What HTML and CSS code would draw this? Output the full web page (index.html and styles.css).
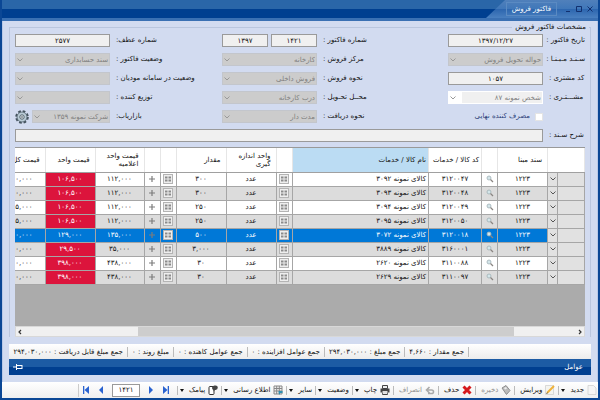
FILE: index.html
```html
<!DOCTYPE html>
<html lang="fa" dir="rtl">
<head>
<meta charset="utf-8">
<title>فاکتور فروش</title>
<link rel="stylesheet" href="styles.css">
</head>
<body>
<svg class="defs" aria-hidden="true">
  <symbol id="chev" viewBox="0 0 8 6"><path d="M1.5 1.5 4 4l2.500-2.500" fill="none" stroke="currentColor"/></symbol>
  <symbol id="card" viewBox="0 0 10 10"><rect x=".5" y=".5" width="9" height="9" fill="#eee" stroke="#b4b4b4"/><path d="M2 2.500h2.500v2H2zM5.500 2.500H8v2H5.500zM2 5.500h2.500v2H2zM5.500 5.500H8v2H5.500z" fill="#8b8b8b"/></symbol>
  <symbol id="plus" viewBox="0 0 8 8"><path d="M4 1v6M1 4h6" stroke="#7c7c7c" stroke-width="1.200"/></symbol>
  <symbol id="mag" viewBox="0 0 8 8"><circle cx="3" cy="3" r="2" fill="#d4e6ea" stroke="#9fb0b5" stroke-width=".8"/><path d="m4.500 4.500 2.500 2.500" stroke="#8a8582" stroke-width="1.200"/></symbol>
</svg>
<div class="window">
  <header class="titlebar">
    <div class="tab">
      <button aria-label="بستن"><svg viewBox="0 0 8 8"><path d="m1.500 1.500 5 5m0-5-5 5"/></svg></button>
      <button aria-label="بزرگ"><svg viewBox="0 0 8 8"><path d="M1.500 1.500h5v5h-5z"/></svg></button>
      <button aria-label="کوچک"><svg viewBox="0 0 8 8"><path d="M2 6.500h4"/></svg></button>
      <h1>فاکتور فروش</h1>
    </div>
  </header>

  <main class="content">
    <fieldset class="panel">
      <legend>مشخصات فاکتور فروش</legend>
      <div class="form">
        <label for="date">تاریخ فاکتور :</label><input id="date" value="۱۳۹۷/۱۲/۲۷">
        <label for="num">شماره فاکتور :</label><div class="pair"><input id="num" value="۱۴۲۱"><input aria-label="سال" value="۱۳۹۷"></div>
        <label for="ref">شماره عطف:</label><input id="ref" value="۲۵۷۷">

        <label for="base">سـنـد مـبـنـا :</label><div class="combo"><select id="base" disabled><option>حواله تحویل فروش</option></select><svg><use href="#chev"/></svg></div>
        <label for="center">مرکز فروش :</label><div class="combo"><select id="center" disabled><option>کارخانه</option></select><svg><use href="#chev"/></svg></div>
        <label for="state">وضعیت فاکتور :</label><div class="combo"><select id="state" disabled><option>سند حسابداری</option></select><svg><use href="#chev"/></svg></div>

        <label for="code">کد مشتری :</label><input id="code" value="۱۰۵۷">
        <label for="kind">نحوه فروش :</label><div class="combo"><select id="kind" disabled><option>فروش داخلی</option></select><svg><use href="#chev"/></svg></div>
        <label for="tax">وضعیت در سامانه مودیان :</label><div class="combo"><select id="tax" disabled><option></option></select><svg><use href="#chev"/></svg></div>

        <label for="cust">مشـــتـری :</label><div class="combo customer"><select id="cust" disabled><option>شخص نمونه ۸۷</option></select><svg><use href="#chev"/></svg></div>
        <label for="place">محــل تحـویل :</label><div class="combo"><select id="place" disabled><option>درب کارخانه</option></select><svg><use href="#chev"/></svg></div>
        <label for="dist">توزیع کننده :</label><div class="combo"><select id="dist" disabled><option></option></select><svg><use href="#chev"/></svg></div>

        <div class="check"><input type="checkbox" id="final"><label for="final">مصرف کننده نهایی</label></div>
        <label for="pay">نحوه دریافت :</label><div class="combo"><select id="pay" disabled><option>مدت دار</option></select><svg><use href="#chev"/></svg></div>
        <label for="agent">بازاریاب:</label>
        <div class="agent"><div class="combo"><select id="agent" disabled><option>شرکت نمونه ۱۳۵۹</option></select><svg><use href="#chev"/></svg></div>
          <button class="gear" aria-label="تنظیمات"><svg viewBox="0 0 14 14"><circle cx="7" cy="7" r="5.600" fill="none" stroke="#44535e" stroke-width="2.400" stroke-dasharray="2.600 1.798"/><circle cx="7" cy="7" r="5" fill="#b9cbd6" stroke="#51616d" stroke-width=".8"/><circle cx="7" cy="7" r="2.200" fill="#eef3f6" stroke="#51616d"/><circle cx="7" cy="7" r=".8" fill="#33424d"/></svg></button></div>

        <label for="desc">شرح سـند :</label><input id="desc" class="wide">
      </div>

      <div class="grid">
        <table>
          <colgroup><col class="c27"><col class="c10"><col class="c50"><col class="c16"><col class="c53"><col><col class="c16"><col class="c50"><col class="c50"><col class="c16"><col class="c16"><col class="c49"><col class="c50"><col class="c30"></colgroup>
          <thead><tr><th colspan="2"></th><th>سند مبنا</th><th></th><th class="tight">کد کالا / خدمات</th><th class="tight sorted">نام کالا / خدمات</th><th></th><th>واحد اندازه گیری</th><th>مقدار</th><th></th><th></th><th>قیمت واحد اعلامیه</th><th>قیمت واحد</th><th class="cut">قیمت کل</th></tr></thead>
          <tbody>
            <tr><td class="rh"></td><td class="rh"><svg class="dd"><use href="#chev"/></svg></td><td>۱۲۲۳</td><td><svg><use href="#mag"/></svg></td><td>۳۱۲۰۰۴۷</td><td class="name">کالای نمونه ۳۰۹۲</td><td><svg class="cd"><use href="#card"/></svg></td><td>عدد</td><td>۳۰۰</td><td><svg class="cd"><use href="#card"/></svg></td><td><svg><use href="#plus"/></svg></td><td>۱۱۲,۰۰۰</td><td class="red">۱۰۶,۵۰۰</td><td class="cut">۰,۰۰۰</td></tr>
            <tr><td class="rh"></td><td class="rh"><svg class="dd"><use href="#chev"/></svg></td><td>۱۲۲۳</td><td><svg><use href="#mag"/></svg></td><td>۳۱۲۰۰۴۸</td><td class="name">کالای نمونه ۳۰۹۳</td><td><svg class="cd"><use href="#card"/></svg></td><td>عدد</td><td>۳۰۰</td><td><svg class="cd"><use href="#card"/></svg></td><td><svg><use href="#plus"/></svg></td><td>۱۱۲,۰۰۰</td><td class="red">۱۰۶,۵۰۰</td><td class="cut">۰,۰۰۰</td></tr>
            <tr><td class="rh"></td><td class="rh"><svg class="dd"><use href="#chev"/></svg></td><td>۱۲۲۳</td><td><svg><use href="#mag"/></svg></td><td>۳۱۲۰۰۴۹</td><td class="name">کالای نمونه ۳۰۹۴</td><td><svg class="cd"><use href="#card"/></svg></td><td>عدد</td><td>۲۵۰</td><td><svg class="cd"><use href="#card"/></svg></td><td><svg><use href="#plus"/></svg></td><td>۱۱۲,۰۰۰</td><td class="red">۱۰۶,۵۰۰</td><td class="cut">۵,۰۰۰</td></tr>
            <tr><td class="rh"></td><td class="rh"><svg class="dd"><use href="#chev"/></svg></td><td>۱۲۲۳</td><td><svg><use href="#mag"/></svg></td><td>۳۱۲۰۰۵۰</td><td class="name">کالای نمونه ۳۰۹۵</td><td><svg class="cd"><use href="#card"/></svg></td><td>عدد</td><td>۲۵۰</td><td><svg class="cd"><use href="#card"/></svg></td><td><svg><use href="#plus"/></svg></td><td>۱۱۲,۰۰۰</td><td class="red">۱۰۶,۵۰۰</td><td class="cut">۵,۰۰۰</td></tr>
            <tr class="sel"><td class="rh"></td><td class="rh"><svg class="dd"><use href="#chev"/></svg></td><td>۱۲۲۳</td><td><svg><use href="#mag"/></svg></td><td>۳۱۲۰۰۱۸</td><td class="name">کالای نمونه ۳۰۷۲</td><td><svg class="cd"><use href="#card"/></svg></td><td>عدد</td><td>۵۰۰</td><td><svg class="cd"><use href="#card"/></svg></td><td><svg><use href="#plus"/></svg></td><td>۱۳۵,۰۰۰</td><td>۱۲۹,۰۰۰</td><td class="cut">۰,۰۰۰</td></tr>
            <tr><td class="rh"></td><td class="rh"><svg class="dd"><use href="#chev"/></svg></td><td>۱۲۲۳</td><td><svg><use href="#mag"/></svg></td><td>۳۱۶۰۰۰۱</td><td class="name">کالای نمونه ۳۸۸۹</td><td><svg class="cd"><use href="#card"/></svg></td><td>عدد</td><td>۳,۰۰۰</td><td><svg class="cd"><use href="#card"/></svg></td><td><svg><use href="#plus"/></svg></td><td>۳۵,۰۰۰</td><td class="red">۲۹,۵۰۰</td><td class="cut">۰,۰۰۰</td></tr>
            <tr><td class="rh"></td><td class="rh"><svg class="dd"><use href="#chev"/></svg></td><td>۱۲۲۳</td><td><svg><use href="#mag"/></svg></td><td>۳۱۱۰۰۸۸</td><td class="name">کالای نمونه ۲۶۲۰</td><td><svg class="cd"><use href="#card"/></svg></td><td>عدد</td><td>۳۰</td><td><svg class="cd"><use href="#card"/></svg></td><td><svg><use href="#plus"/></svg></td><td>۴۳۸,۰۰۰</td><td class="red">۳۹۸,۰۰۰</td><td class="cut">۰,۰۰۰</td></tr>
            <tr><td class="rh"></td><td class="rh"><svg class="dd"><use href="#chev"/></svg></td><td>۱۲۲۳</td><td><svg><use href="#mag"/></svg></td><td>۳۱۱۰۰۹۷</td><td class="name">کالای نمونه ۲۶۲۹</td><td><svg class="cd"><use href="#card"/></svg></td><td>عدد</td><td>۳۰</td><td><svg class="cd"><use href="#card"/></svg></td><td><svg><use href="#plus"/></svg></td><td>۴۳۸,۰۰۰</td><td class="red">۳۹۸,۰۰۰</td><td class="cut">۰,۰۰۰</td></tr>
          </tbody>
        </table>
        <div class="scroll"><svg viewBox="0 0 8 8"><path d="m3 2 2 2-2 2"/></svg><div class="track"><div class="thumb"></div></div><svg viewBox="0 0 8 8"><path d="M5 2 3 4l2 2"/></svg></div>
      </div>
    </fieldset>

    <div class="sums">
      <span>جمع مقدار : <b>۴,۶۶۰</b></span><span>جمع مبلغ : <b>۲۹۴,۰۳۰,۰۰۰</b></span><span>جمع عوامل افزاینده : <b>۰</b></span><span>جمع عوامل کاهنده : <b>۰</b></span><span>مبلغ روند : <b>۰</b></span><span>جمع مبلغ قابل دریافت : <b>۲۹۴,۰۳۰,۰۰۰</b></span>
    </div>
    <div class="factors"><span>عوامل</span><svg viewBox="0 0 10 8"><path d="M0 4h3M3.500 1v6M4 2.500h5M4 5.500h5M9 2v4" fill="none" stroke="#fff"/></svg></div>
  </main>

  <footer class="toolbar">
    <button class="menu"><svg viewBox="0 0 10 10"><path d="M1 .5h5.500L9 3v6.500H1z" fill="#f5f5f5" stroke="#ccc" stroke-width=".7"/></svg>جدید<i class="caret"></i></button>
    <button><svg viewBox="0 0 10 10"><path d="M.5.500h8v9h-8z" fill="#f4f4ef" stroke="#ccc" stroke-width=".7"/><path d="m2 8 7-7" stroke="#efb23a" stroke-width="2"/><path d="m1.500 9 1-1.500" stroke="#666"/></svg>ویرایش</button>
    <button class="off"><svg viewBox="0 0 10 10"><path d="m1 3 4-2.500 4 5-3.500 4z" fill="#bbb" stroke="#8e8e8e"/><path d="m3 3 2-1 1 1.500-2 1z" fill="#eee"/></svg>ذخیره</button>
    <button><svg viewBox="0 0 10 10"><path d="m1.500 1.500 7 7m0-7-7 7" stroke="#d6191c" stroke-width="3"/></svg>حذف</button>
    <button class="off"><svg viewBox="0 0 10 10"><path d="M2 5h4.500q2 0 2 1.800T6.500 8.500H3M4.500 2 1.500 5l3 3" fill="none" stroke="#aaa" stroke-width="1.600"/></svg>انصراف</button>
    <button class="menu"><svg viewBox="0 0 10 10"><path d="M2.500.500h5v3h-5zM2.500 6.500h5v3h-5z" fill="#eee" stroke="#444"/><path d="M.5 3.500h9v4h-9z" fill="#444"/><path d="M2.500 6h5v2.500h-5z" fill="#ddd"/></svg>چاپ<i class="caret"></i></button>
    <button class="menu">وضعیت<i class="caret"></i></button>
    <button class="menu">سایر<i class="caret"></i></button>
    <button class="menu"><svg viewBox="0 0 10 10"><path d="M1 1h8v8H1z" fill="#eee" stroke="#888"/><path d="M1 3.500h8M1 6h8M3.700 1v8M6.300 1v8" stroke="#888"/><path d="M5.500 6h4v2h-2l-1.500 2z" fill="#2f8fb0"/></svg>اطلاع رسانی<i class="caret"></i></button>
    <button class="menu"><svg viewBox="0 0 10 10"><rect x="1" y="1.500" width="5" height="8" rx="1" fill="#fff" stroke="#333"/><path d="M6.500.500h1q2.300 0 2.300 2T7.500 5H7L5.500 6.500V5Q4 4.500 4 2.700T6.500.500z" fill="#444"/></svg>پیامک<i class="caret"></i></button>
    <div class="pager">
      <button aria-label="آخر"><svg viewBox="0 0 8 8"><path d="M1 0l4.500 4L1 8zM5.700 0H7v8H5.700z"/></svg></button>
      <button aria-label="بعدی"><svg viewBox="0 0 8 8"><path d="M2 0l4 4-4 4z"/></svg></button>
      <input aria-label="شماره" value="۱۴۲۱">
      <button aria-label="قبلی"><svg viewBox="0 0 8 8"><path d="M6 0 2 4l4 4z"/></svg></button>
      <button aria-label="اول"><svg viewBox="0 0 8 8"><path d="M7 0 2.500 4 7 8zM1 0h1.300v8H1z"/></svg></button>
    </div>
  </footer>
</div>
</body>
</html>
```

FILE: styles.css
```css
* { box-sizing: border-box; }
body { margin: 0; font: 7px/10px "DejaVu Sans", sans-serif; color: #111; }
button, input, select { font: inherit; color: inherit; margin: 0; padding: 0; border: 0; background: none; border-radius: 0; }
.defs { display: none; }
svg { display: block; width: 8px; height: 8px; }
.window { min-height: 100vh; display: flex; flex-direction: column; background: #d2dbf0; border: 2px solid #0b4795; border-top: 0; }

.titlebar { height: 21px; background: linear-gradient(#2a66a8 0 9px, #003f90 9px 18px, #3a70b3 18px); }
.tab { width: 112px; height: 18px; padding-right: 4px; display: flex; align-items: center; gap: 3px; background: linear-gradient(#5080bb, #3f77b9 50%, #2c65ae 50%, #4a80c0); clip-path: polygon(17% 0, 100% 0, 100% 100%, 0 100%); }
.tab svg { fill: none; stroke: #12306f; }
.tab h1 { margin: 0 4px 0 0; padding: 0 5px; font-size: 7px; font-weight: 400; line-height: 12px; color: #fff; border: 1px solid #5a8ac2; white-space: nowrap; }

.content { flex: 1; padding: 1px 6px 7px; border: solid #b9c9e8; border-width: 0 1px; }
.panel { margin: 0; padding: 2px 5px 0; border: 1px solid #bac6de; border-bottom: 0; min-width: 0; }
.panel legend { padding: 0 3px; margin-right: -4px; line-height: 10px; }
.form { display: grid; grid-template-columns: 36px 1fr 119px 1fr 100px 1fr; grid-auto-rows: 13px; gap: 6px; align-items: stretch; }
.form label { text-align: left; line-height: 13px; white-space: nowrap; }
.form input:not([type]), .pager input { width: 100%; min-width: 0; text-align: center; background: #f0f0f0; border: 1px solid #9a9a9a; }
.pair, .agent { display: flex; gap: 3px; min-width: 0; }
.agent { align-items: center; }
.agent .combo { flex: 1; }
.combo { position: relative; min-width: 0; height: 13px; color: #999; }
.combo select { appearance: none; width: 100%; height: 13px; padding: 0 1px; background: #ccc; border: 1px solid #c3c6cc; opacity: 1; color: #808080; }
.combo svg { position: absolute; left: 1px; top: 4px; height: 6px; }
.customer select { background: linear-gradient(90deg, #fff 13px, #f0f0f0 13px); border-color: #fff; }
.gear svg { width: 14px; height: 14px; }
.check { grid-column: 2; display: flex; align-items: center; gap: 5px; color: #2c3f78; }
.check input { appearance: none; width: 8px; height: 8px; background: #fff; border: 1px solid #e4e4e4; }
.form .wide { grid-column: 2 / -1; }

.grid { margin-top: 5px; height: 190px; display: flex; flex-direction: column; background: #ababab; border-top: 1px solid #999; }
table { width: 100%; table-layout: fixed; border-collapse: collapse; }
.c10 { width: 10px; } .c16 { width: 16px; } .c27 { width: 27px; } .c30 { width: 30px; } .c49 { width: 49px; } .c50 { width: 50px; } .c53 { width: 53px; }
th { height: 24px; padding: 0 5px; font-weight: 400; line-height: 8px; text-align: right; background: #fff; border: solid #e6e6e6; border-width: 0 1px; border-bottom: 1px solid #a0a0a0; }
th.tight { padding: 0 2px; white-space: nowrap; }
th.sorted { background: #bbdcf3; }
td { height: 14px; padding: 0; text-align: center; line-height: 12px; background: #fff; border: 1px solid #a6a6a6; overflow: hidden; white-space: nowrap; }
tr:nth-child(even) td { background: #dcdcdc; }
td svg { margin: 0 auto; }
td .dd { height: 6px; color: #555; }
td .cd { width: 10px; height: 10px; }
td.name { text-align: right; padding-right: 2px; }
td.rh, tr:nth-child(even) td.rh { background: #e1e1e1; }
td.red, tr:nth-child(even) td.red { background: #dc143c; color: #fff; }
.sel td:not(.rh) { background: #0078d7; color: #fff; }
th.cut, td.cut { border-left: 0; white-space: nowrap; overflow: hidden; }
td.cut { text-align: right; padding-right: 12px; }
.scroll { margin-top: auto; height: 11px; display: flex; align-items: center; background: #f0f0f0; border: 1px solid #d8d8d8; }
.scroll svg { fill: none; stroke: #333; stroke-width: 1.200; }
.track { flex: 1; height: 100%; padding: 0 11% 0 20%; direction: ltr; }
.thumb { height: 100%; background: #cdcdcd; }

.sums { margin: 7px 0 0; height: 15px; padding-right: 122px; display: flex; align-items: center; background: linear-gradient(#fff, #ececec); white-space: nowrap; }
.sums span { padding: 0 4px; border-right: 1px solid #bbb; }
.sums b { font-weight: 400; }
.factors { height: 16px; padding: 0 8px 0 4px; display: flex; align-items: center; justify-content: space-between; color: #fff; background: linear-gradient(#1c5ba4 0 50%, #003f90 50%); }
.factors svg { width: 10px; }

.toolbar { height: 19px; padding: 0 1px; display: flex; align-items: center; background: linear-gradient(#fff, #efefef); border-bottom: 3px solid #0b4795; white-space: nowrap; }
.toolbar > button { display: flex; align-items: center; gap: 3px; height: 9px; padding: 0 3px 0 5px; border-left: 1px solid #bbb; }
.toolbar > .menu { padding-left: 2px; }
.toolbar > button:first-child { padding-right: 0; }
.toolbar > button svg { width: 10px; height: 10px; }
.off { color: #8d8d8d; }
.caret { margin-right: 2px; border: solid transparent; border-width: 3px 2px 0; border-top-color: #111; }
.pager { direction: ltr; display: flex; flex-direction: row-reverse; align-items: center; gap: 7px; padding: 0 7px 0 3px; border-left: 1px solid #ccc; }
.pager svg { fill: #2a63d0; }
.pager input { width: 28px; height: 13px; background: #fff; }
```
